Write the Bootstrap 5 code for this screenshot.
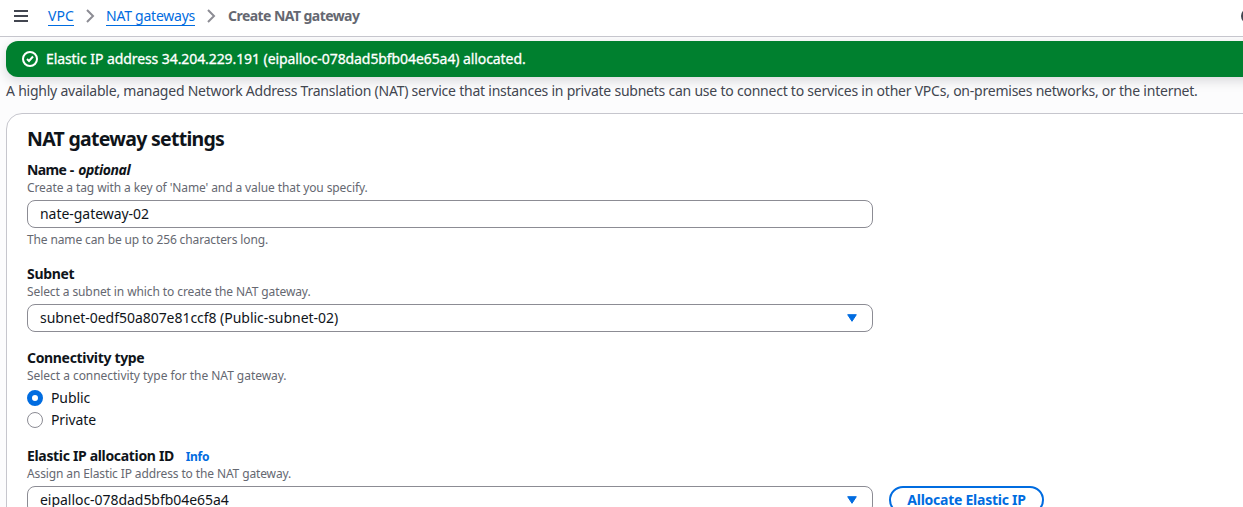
<!DOCTYPE html>
<html lang="en">
<head>
<meta charset="utf-8">
<meta name="viewport" content="width=device-width, initial-scale=1">
<title>Create NAT gateway</title>
<link rel="stylesheet" href="https://cdn.jsdelivr.net/npm/bootstrap@5.3.0/dist/css/bootstrap.min.css">
<style>
body{font-family:"Noto Sans","Open Sans",sans-serif;font-size:14px;line-height:20px;color:#0f141a;background:#fcfcfd}
.page{height:100vh;white-space:nowrap}
.topbar{height:37px;border-bottom:1px solid #c6c6cd;padding-bottom:4px;flex:none}
.menu-icon{margin-left:14px;margin-right:20px}
.crumb{color:#006ce0;border-bottom:1px solid #006ce0;text-decoration:none;line-height:18px;letter-spacing:-.235px}
.crumb-root{letter-spacing:.1px}
.crumb-now{color:#656871;font-weight:700;letter-spacing:-.56px;margin-left:1px}
.help-icon{right:-14px;top:8px}
.flash{margin:4px -20px 0 6px;height:36px;flex:none;border-radius:12px;background:#00802f;color:#fff;padding-left:16px;gap:8px;letter-spacing:-.083px;-webkit-text-stroke:.3px #fff;box-shadow:0 4px 12px rgba(0,7,22,.14)}
.intro{margin:4px 0 0 6px;color:#424650;letter-spacing:-.229px}
.panel{margin:12px -30px -20px 6px;border:1px solid #c6c6cd;border-radius:16px;background:#fff;padding:13px 20px 0;flex:1;min-height:0;overflow:hidden}
.panel-title{font-size:19.5px;line-height:24px;font-weight:700;margin:0 0 9px;letter-spacing:-.72px}
.field{margin-bottom:16px}
.field-label{font-weight:700;line-height:20px;height:20px;letter-spacing:-.33px}
.field-label .name-text{letter-spacing:-.6px}
.field-label .opt{letter-spacing:-.45px;margin-left:1px}
.hint{font-size:12px;line-height:16px;color:#656871;letter-spacing:-.1px}
.hint-name{letter-spacing:-.125px}
.hint-type{letter-spacing:-.04px}
.control{width:846px;height:28px;border:1px solid #8c8c94;border-radius:8px;padding:0 15px 0 12px;background:#fff;letter-spacing:-.04px}
.options{gap:2px}
.options label{letter-spacing:-.1px}
.radio{width:16px;height:16px;margin:0;border:1px solid #8c8c94;box-shadow:none}
.form-check-input.radio:checked{background:#fff;border:5px solid #006ce0}
.info{font-size:12px;font-weight:700;color:#006ce0;text-decoration:none;margin-left:8.5px}
.btn-eip{height:28px;width:155px;border:2px solid #006ce0;border-radius:20px;color:#006ce0;font-size:14px;line-height:20px;font-weight:700;padding:2px 0;letter-spacing:-.25px}
</style>
</head>
<body>
<div class="page d-flex flex-column overflow-hidden">
<header class="topbar d-flex align-items-center position-relative bg-white">
<svg class="menu-icon" width="14" height="12" viewBox="0 0 14 12"><path d="M0 1h14M0 6h14M0 11h14" stroke="#424650" stroke-width="2"/></svg>
<a class="crumb crumb-root" href="#">VPC</a>
<svg class="mx-2" width="16" height="16" viewBox="0 0 16 16"><path d="m5 2 6 6-6 6" fill="none" stroke="#8c8c94" stroke-width="2"/></svg>
<a class="crumb" href="#">NAT gateways</a>
<svg class="mx-2" width="16" height="16" viewBox="0 0 16 16"><path d="m5 2 6 6-6 6" fill="none" stroke="#8c8c94" stroke-width="2"/></svg>
<span class="crumb-now">Create NAT gateway</span>
<svg class="help-icon position-absolute" width="16" height="16" viewBox="0 0 16 16" fill="none" stroke="#424650" stroke-width="2"><circle cx="8" cy="8" r="7"/></svg>
</header>
<div class="flash d-flex align-items-center">
<svg width="16" height="16" viewBox="0 0 16 16" fill="none" stroke="#fff" stroke-width="2"><circle cx="8" cy="8" r="7"/><path d="m5 8 2 2 4-4.500"/></svg>
<span>Elastic IP address 34.204.229.191 (eipalloc-078dad5bfb04e65a4) allocated.</span>
</div>
<p class="intro">A highly available, managed Network Address Translation (NAT) service that instances in private subnets can use to connect to services in other VPCs, on-premises networks, or the internet.</p>
<main class="panel">
<h1 class="panel-title">NAT gateway settings</h1>
<div class="field">
<div class="field-label"><span class="name-text">Name</span> - <i class="opt">optional</i></div>
<div class="hint">Create a tag with a key of 'Name' and a value that you specify.</div>
<div class="control d-flex align-items-center my-1">nate-gateway-02</div>
<div class="hint hint-name">The name can be up to 256 characters long.</div>
</div>
<div class="field">
<div class="field-label">Subnet</div>
<div class="hint">Select a subnet in which to create the NAT gateway.</div>
<div class="control d-flex align-items-center justify-content-between mt-1"><span>subnet-0edf50a807e81ccf8 (Public-subnet-02)</span>
<svg width="10" height="8" viewBox="0 0 10 8"><path d="M.7.7h8.600L5 7.300z" fill="#006ce0" stroke="#006ce0" stroke-linejoin="round"/></svg></div>
</div>
<div class="field">
<div class="field-label">Connectivity type</div>
<div class="hint hint-type">Select a connectivity type for the NAT gateway.</div>
<div class="options mt-1 d-flex flex-column">
<label class="d-flex align-items-center gap-2"><input class="form-check-input radio" type="radio" name="type" checked>Public</label>
<label class="d-flex align-items-center gap-2"><input class="form-check-input radio" type="radio" name="type">Private</label>
</div>
</div>
<div class="field">
<div class="field-label">Elastic IP allocation ID <a class="info" href="#">Info</a></div>
<div class="hint hint-name">Assign an Elastic IP address to the NAT gateway.</div>
<div class="mt-1 d-flex gap-3">
<div class="control d-flex align-items-center justify-content-between"><span>eipalloc-078dad5bfb04e65a4</span>
<svg width="10" height="8" viewBox="0 0 10 8"><path d="M.7.7h8.600L5 7.300z" fill="#006ce0" stroke="#006ce0" stroke-linejoin="round"/></svg></div>
<button class="btn btn-eip">Allocate Elastic IP</button>
</div>
</div>
</main>
</div>
<script src="https://cdn.jsdelivr.net/npm/bootstrap@5.3.0/dist/js/bootstrap.bundle.min.js"></script>
</body>
</html>
